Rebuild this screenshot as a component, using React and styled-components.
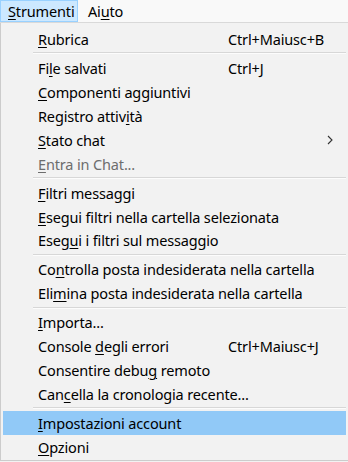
import React from "react";
import styled, { createGlobalStyle } from "styled-components";

const GlobalStyle = createGlobalStyle`
  html, body {
    margin: 0;
    padding: 0;
    background: #f2f2f2;
  }
  body {
    font-family: "Segoe UI", "Noto Sans", "Liberation Sans", sans-serif;
  }
`;

const menu = [
  { label: "Rubrica", key: 0, shortcut: "Ctrl+Maiusc+B" },
  "sep",
  { label: "File salvati", key: 2, shortcut: "Ctrl+J" },
  { label: "Componenti aggiuntivi", key: 0 },
  { label: "Registro attività", key: 14 },
  { label: "Stato chat", key: 0, submenu: true },
  { label: "Entra in Chat...", key: 0, disabled: true },
  "sep",
  { label: "Filtri messaggi", key: 0 },
  { label: "Esegui filtri nella cartella selezionata", key: 0 },
  { label: "Esegui i filtri sul messaggio", key: 4 },
  "sep",
  { label: "Controlla posta indesiderata nella cartella", key: 2 },
  { label: "Elimina posta indesiderata nella cartella", key: 3 },
  "sep",
  { label: "Importa...", key: 0 },
  { label: "Console degli errori", key: 8, shortcut: "Ctrl+Maiusc+J" },
  { label: "Consentire debug remoto", key: 15 },
  { label: "Cancella la cronologia recente...", key: 3 },
  "sep",
  { label: "Impostazioni account", key: 0, active: true },
  { label: "Opzioni", key: 0 },
];

function Mnemonic({ text, index }) {
  return (
    <>
      {text.slice(0, index)}
      <U>{text[index]}</U>
      {text.slice(index + 1)}
    </>
  );
}

export default function App() {
  return (
    <Page>
      <GlobalStyle />
      <MenuBar>
        <Tab open>
          <Mnemonic text="Strumenti" index={0} />
        </Tab>
        <Tab>
          <Mnemonic text="Aiuto" index={2} />
        </Tab>
      </MenuBar>
      <Popup>
        {menu.map((item, i) =>
          item === "sep" ? (
            <Separator key={i} />
          ) : (
            <Item key={i} active={item.active} disabled={item.disabled}>
              <Label>
                <Mnemonic text={item.label} index={item.key} />
              </Label>
              {item.shortcut && <Shortcut>{item.shortcut}</Shortcut>}
              {item.submenu && (
                <Arrow viewBox="0 0 6 10" width="6" height="10">
                  <path d="M1 1 L5 5 L1 9" fill="none" stroke="#333" strokeWidth="1.1" />
                </Arrow>
              )}
            </Item>
          )
        )}
      </Popup>
    </Page>
  );
}

const Page = styled.div`
  width: 348px;
  height: 462px;
  overflow: hidden;
  font-size: 14.5px;
  letter-spacing: -0.15px;
  color: #000;
`;

const MenuBar = styled.div`
  display: flex;
  height: 23px;
  background: #f9f9f9;
  border-bottom: 1px solid #d9d9d9;
  box-sizing: border-box;
`;

const Tab = styled.div`
  width: ${(p) => (p.open ? "78px" : "auto")};
  height: 22px;
  line-height: 20px;
  padding: 0 7px 0 ${(p) => (p.open ? "7px" : "9px")};
  box-sizing: border-box;
  border: 1px solid ${(p) => (p.open ? "#99d1ff" : "transparent")};
  background: ${(p) => (p.open ? "#cce8ff" : "transparent")};
`;

const Popup = styled.div`
  background: #f2f2f2;
  border-left: 1px solid #cccccc;
  border-bottom: 1px solid #cccccc;
  padding: 4px 2px 1px 2px;
  height: 438px;
  box-sizing: border-box;
  display: flex;
  flex-direction: column;
`;

const Item = styled.div`
  display: flex;
  align-items: center;
  height: 24px;
  padding-left: 35px;
  white-space: nowrap;
  background: ${(p) => (p.active ? "#91c9f7" : "transparent")};
  color: ${(p) => (p.disabled ? "#6d6d6d" : "#000")};
`;

const Label = styled.span`
  min-width: 190px;
`;

const Shortcut = styled.span``;

const Arrow = styled.svg`
  margin-left: auto;
  margin-right: 13px;
`;

const Separator = styled.div`
  height: 5px;
  margin-left: 30px;
  display: flex;
  align-items: center;
  &::before {
    content: "";
    flex: 1;
    height: 1px;
    background: #d7d7d7;
    border-bottom: 1px solid #fcfcfc;
  }
`;

const U = styled.span`
  text-decoration: underline;
  text-underline-offset: 2px;
  text-decoration-thickness: 1px;
`;
